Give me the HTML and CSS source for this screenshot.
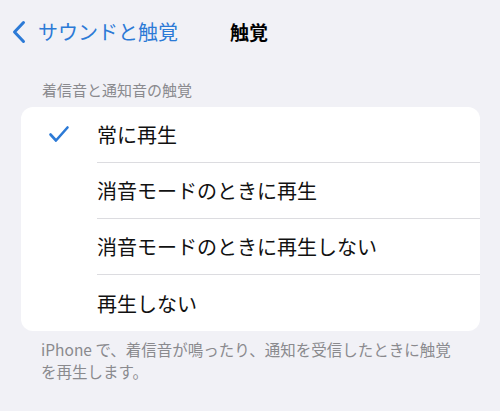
FILE: index.html
```html
<!DOCTYPE html>
<html lang="ja">
<head>
<meta charset="utf-8">
<link rel="stylesheet" href="styles.css">
</head>
<body>
<div class="screen">
  <header class="nav">
    <div class="back">
      <svg class="chev" width="14" height="24" viewBox="0 0 14 24"><path d="M11.5 2.5 L2.5 12 L11.5 21.5" fill="none" stroke="#2c7ad6" stroke-width="3" stroke-linecap="round" stroke-linejoin="round"/></svg>
      <span class="back-label">サウンドと触覚</span>
    </div>
    <div class="title">触覚</div>
  </header>
  <div class="section-head">着信音と通知音の触覚</div>
  <div class="card">
    <div class="row">
      <div class="check"><svg width="22" height="18" viewBox="0 0 22 18"><path d="M2.5 9.5 L8 15.5 L19.5 2.5" fill="none" stroke="#2c7ad6" stroke-width="2.6" stroke-linecap="round" stroke-linejoin="round"/></svg></div>
      <div class="label">常に再生</div>
    </div>
    <div class="row">
      <div class="check"></div>
      <div class="label">消音モードのときに再生</div>
    </div>
    <div class="row">
      <div class="check"></div>
      <div class="label">消音モードのときに再生しない</div>
    </div>
    <div class="row">
      <div class="check"></div>
      <div class="label">再生しない</div>
    </div>
  </div>
  <p class="footer">iPhone で、着信音が鳴ったり、通知を受信したときに触覚を再生します。</p>
</div>
</body>
</html>
```
FILE: styles.css
```css
html, body {
  margin: 0;
  padding: 0;
}
body {
  background: #f1f1f6;
  font-family: "Noto Sans CJK JP", "Noto Sans", sans-serif;
  width: 500px;
  height: 411px;
  overflow: hidden;
}
.screen {
  display: flex;
  flex-direction: column;
}
.nav {
  display: flex;
  align-items: center;
  padding: 10px 0 0 12px;
  box-sizing: border-box;
  height: 54px;
}
.back {
  display: flex;
  align-items: center;
  gap: 12px;
  width: 218px;
}
.chev {
  display: block;
}
.back-label {
  color: #2c7ad6;
  font-size: 20px;
  line-height: 24px;
}
.title {
  font-size: 19px;
  font-weight: 700;
  color: #000;
  line-height: 24px;
}
.section-head {
  margin: 26px 0 0 42px;
  font-size: 15px;
  line-height: 20px;
  color: #8a8a8e;
}
.card {
  margin: 7px 20px 0 21px;
  background: #fff;
  border-radius: 12px;
  overflow: hidden;
}
.row {
  display: flex;
  align-items: center;
  height: 56px;
}
.check {
  width: 76px;
  flex: none;
  display: flex;
  justify-content: flex-start;
  padding-left: 27px;
  box-sizing: border-box;
}
.check svg {
  display: block;
  margin-top: -2px;
}
.label {
  flex: 1;
  height: 56px;
  display: flex;
  align-items: center;
  font-size: 20px;
  color: #111;
  border-bottom: 1px solid #dcdce0;
  box-sizing: border-box;
}
.row:last-child .label {
  border-bottom: none;
}
.footer {
  margin: 7px 40px 0 41px;
  font-size: 15.5px;
  line-height: 22px;
  color: #8a8a8e;
}
```
